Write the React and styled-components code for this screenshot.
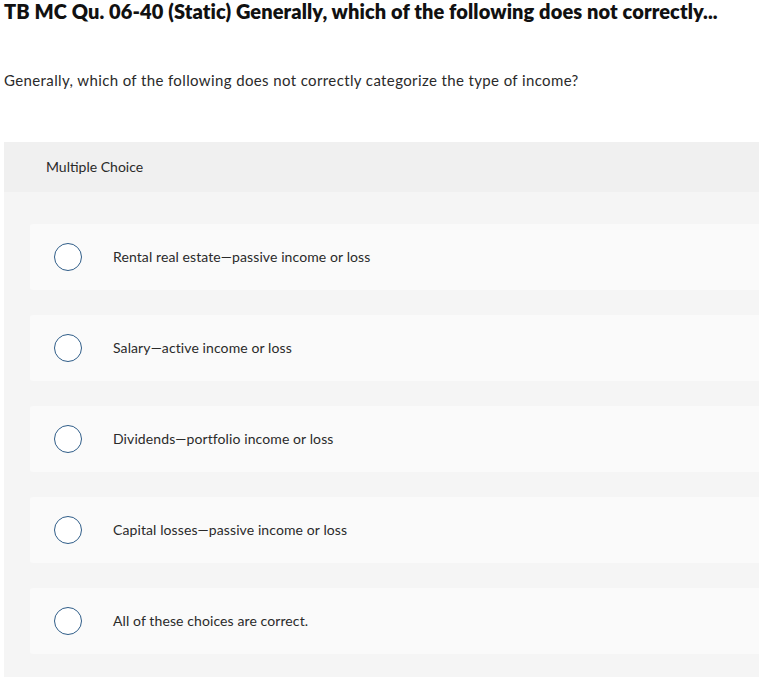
import React from "react";
import styled, { createGlobalStyle } from "styled-components";

const Global = createGlobalStyle`
  html, body { margin: 0; padding: 0; background: #fff; overflow: hidden; }
  body { font-family: Lato, "Open Sans", Arial, sans-serif; color: #1a1a1a; }
`;

const Page = styled.div`
  padding: 0 0 0 4px;
  width: 755px;
  height: 677px;
  overflow: hidden;
`;

const Title = styled.h1`
  margin: 0;
  padding-top: 1px;
  font-size: 20px;
  line-height: 20px;
  font-weight: 800;
  letter-spacing: 0.1px;
  color: #111;
  white-space: nowrap;
`;

const Question = styled.p`
  margin: 49px 0 0;
  font-size: 15px;
  line-height: 20px;
  letter-spacing: 0.38px;
  color: #2a2a2a;
`;

const Panel = styled.section`
  margin-top: 52px;
  background: #f5f5f5;
  padding-bottom: 24px;
`;

const PanelHeader = styled.div`
  height: 50px;
  background: #f0f0f0;
  display: flex;
  align-items: center;
  padding-left: 42px;
  padding-bottom: 2px;
  box-sizing: border-box;
  font-size: 14px;
  color: #2a2a2a;
`;

const Choices = styled.div`
  display: flex;
  flex-direction: column;
  gap: 25px;
  padding: 32px 0 0 26px;
`;

const Choice = styled.label`
  display: flex;
  align-items: center;
  height: 66px;
  box-sizing: border-box;
  padding-bottom: 2px;
  background: #fafafa;
  border-radius: 3px 0 0 3px;
  padding-left: 24px;
  font-size: 14px;
  letter-spacing: 0.1px;
  color: #2a2a2a;
  cursor: pointer;
`;

const Radio = styled.span`
  width: 26px;
  height: 26px;
  border-radius: 50%;
  border: 1.5px solid #2f5d88;
  background: #fff;
  flex: none;
  margin-right: 31px;
  margin-top: 2px;
`;

const choices = [
  "Rental real estate\u2014passive income or loss",
  "Salary\u2014active income or loss",
  "Dividends\u2014portfolio income or loss",
  "Capital losses\u2014passive income or loss",
  "All of these choices are correct.",
];

export default function App() {
  return (
    <Page>
      <Global />
      <Title>TB MC Qu. 06-40 (Static) Generally, which of the following does not correctly...</Title>
      <Question>Generally, which of the following does not correctly categorize the type of income?</Question>
      <Panel>
        <PanelHeader>Multiple Choice</PanelHeader>
        <Choices>
          {choices.map((c) => (
            <Choice key={c}>
              <Radio />
              {c}
            </Choice>
          ))}
        </Choices>
      </Panel>
    </Page>
  );
}
